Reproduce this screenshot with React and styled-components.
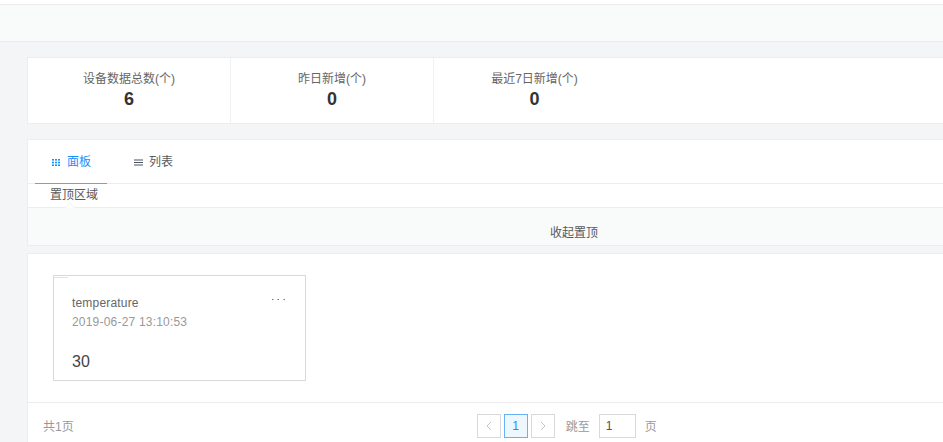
import React from "react";
import styled, { createGlobalStyle } from "styled-components";

const stats = [
  { label: "设备数据总数(个)", value: 6 },
  { label: "昨日新增(个)", value: 0 },
  { label: "最近7日新增(个)", value: 0 },
];

const App = () => {
  return (
    <Page>
      <GlobalStyle />
      <TopBar />
      <Content>
        <StatsCard>
          {stats.map((stat) => (
            <StatItem key={stat.label}>
              <StatLabel>{stat.label}</StatLabel>
              <StatValue>{stat.value}</StatValue>
            </StatItem>
          ))}
        </StatsCard>
        <TabsCard>
          <TabBar>
            <Tab $active>
              <svg width="9" height="7" viewBox="0 0 9 7" fill="#1890ff">
                <rect x="0" y="0" width="2" height="1.6" />
                <rect x="3" y="0" width="2" height="1.6" />
                <rect x="6" y="0" width="2" height="1.6" />
                <rect x="0" y="2.7" width="2" height="1.6" />
                <rect x="3" y="2.7" width="2" height="1.6" />
                <rect x="6" y="2.7" width="2" height="1.6" />
                <rect x="0" y="5.4" width="2" height="1.6" />
                <rect x="3" y="5.4" width="2" height="1.6" />
                <rect x="6" y="5.4" width="2" height="1.6" />
              </svg>
              面板
            </Tab>
            <Tab>
              <svg width="9" height="7" viewBox="0 0 9 7" fill="#4c5566">
                <rect x="0" y="0.5" width="9" height="1" />
                <rect x="0" y="3" width="9" height="1" />
                <rect x="0" y="5.5" width="9" height="1" />
              </svg>
              列表
            </Tab>
          </TabBar>
          <PinnedHead>
            置顶区域
            <Caret />
          </PinnedHead>
          <PinnedBody>收起置顶</PinnedBody>
        </TabsCard>
        <ListCard>
          <Grid>
            <DataCard>
              <Notch />
              <CardTop>
                <CardName>temperature</CardName>
                <More>
                  <svg width="13" height="1" viewBox="0 0 13 1" fill="#777">
                    <rect x="0" y="0" width="1.5" height="1" />
                    <rect x="5.5" y="0" width="1.5" height="1" />
                    <rect x="11.5" y="0" width="1.5" height="1" />
                  </svg>
                </More>
              </CardTop>
              <CardTime>2019-06-27 13:10:53</CardTime>
              <CardValue>30</CardValue>
            </DataCard>
          </Grid>
          <Footer>
            <Total>共1页</Total>
            <Pager>
              <PageBtn>
                <svg width="6" height="10" viewBox="0 0 6 10" fill="none" stroke="#c4c4c4">
                  <path d="M5 1 1 5l4 4" />
                </svg>
              </PageBtn>
              <PageBtn $active>1</PageBtn>
              <PageBtn>
                <svg width="6" height="10" viewBox="0 0 6 10" fill="none" stroke="#c4c4c4">
                  <path d="m1 1 4 4-4 4" />
                </svg>
              </PageBtn>
              <JumpLabel>跳至</JumpLabel>
              <JumpInput defaultValue="1" />
              <PageUnit>页</PageUnit>
            </Pager>
          </Footer>
        </ListCard>
      </Content>
    </Page>
  );
};

const GlobalStyle = createGlobalStyle`
  html, body {
    margin: 0;
    padding: 0;
    height: 100%;
    overflow: hidden;
    background: #f3f5f7;
  }
  body {
    font-family: "Liberation Sans", "Noto Sans CJK SC", sans-serif;
    font-size: 12px;
    color: #595959;
  }
`;

const Page = styled.div`
  width: 943px;
  height: 442px;
  overflow: hidden;
  background: #f3f5f7;
`;

const TopBar = styled.div`
  height: 36px;
  margin-top: 4px;
  background: #f9fafa;
  border-top: 1px solid #ececec;
  border-bottom: 1px solid #ebebeb;
  box-shadow: 0 -4px 0 #fff;
`;

const Content = styled.div`
  width: 1100px;
  padding: 15px 0 0 27px;
  display: flex;
  flex-direction: column;
  gap: 15px;
`;

const StatsCard = styled.section`
  display: flex;
  height: 65px;
  background: #fff;
  border: 1px solid #ebedf0;
`;

const StatItem = styled.div`
  width: 203px;
  box-sizing: border-box;
  border-right: 1px solid #f0f1f3;
  padding-top: 13px;
  display: flex;
  flex-direction: column;
  align-items: center;
  &:last-child {
    width: 201px;
    border-right: none;
  }
`;

const StatLabel = styled.div`
  line-height: 17px;
  color: #666;
`;

const StatValue = styled.div`
  font-size: 18px;
  font-weight: 700;
  line-height: 23px;
  color: #333;
`;

const TabsCard = styled.section`
  background: #fff;
  border: 1px solid #ebedf0;
  margin-bottom: -8px;
`;

const TabBar = styled.div`
  display: flex;
  height: 43px;
  padding-left: 7px;
  border-bottom: 1px solid #ebedf0;
`;

const Tab = styled.div`
  width: 72px;
  height: 44px;
  margin-right: 10px;
  box-sizing: border-box;
  padding: 14px 0 0 17px;
  display: flex;
  align-items: flex-start;
  gap: 6px;
  line-height: 16px;
  color: ${(props) => (props.$active ? "#1890ff" : "#595959")};
  border-bottom: ${(props) => (props.$active ? "1px solid #5aa8f5" : "none")};
  svg {
    margin-top: 5px;
    flex: none;
  }
`;

const PinnedHead = styled.div`
  position: relative;
  height: 23px;
  padding-left: 22px;
  line-height: 23px;
  color: #595959;
  border-bottom: 1px solid #ebedf0;
`;

const Caret = styled.span`
  position: absolute;
  left: 38px;
  bottom: -1px;
  width: 7px;
  height: 7px;
  background: #fff;
  border-top: 1px solid #f1f1f1;
  border-left: 1px solid #f1f1f1;
  transform: translateY(4px) rotate(45deg);
  clip-path: polygon(0 0, 100% 0, 0 100%);
`;

const PinnedBody = styled.div`
  height: 37px;
  background: #f9fafa;
  box-sizing: border-box;
  padding-top: 17px;
  padding-left: 522px;
  line-height: 17px;
  color: #595959;
`;

const ListCard = styled.section`
  background: #fff;
  border: 1px solid #ebedf0;
  height: 220px;
`;

const Grid = styled.div`
  height: 149px;
  padding: 21px 0 0 25px;
  box-sizing: border-box;
  border-bottom: 1px solid #ececec;
`;

const DataCard = styled.div`
  position: relative;
  width: 253px;
  height: 106px;
  box-sizing: border-box;
  border: 1px solid #d9d9d9;
  padding: 20px 18px 0;
`;

const Notch = styled.span`
  position: absolute;
  left: 0;
  top: 0;
  width: 14px;
  height: 1px;
  border-bottom: 1px solid #e4e4e4;
`;

const CardTop = styled.div`
  display: flex;
  justify-content: space-between;
`;

const CardName = styled.div`
  line-height: 15px;
  letter-spacing: 0.18px;
  color: #666;
`;

const More = styled.span`
  margin-right: 2px;
  svg {
    display: block;
    margin-top: 3px;
  }
`;

const CardTime = styled.div`
  margin-top: 4px;
  line-height: 15px;
  letter-spacing: 0.2px;
  color: #999;
`;

const CardValue = styled.div`
  margin-top: 22px;
  font-size: 16px;
  line-height: 20px;
  color: #444;
`;

const Footer = styled.div`
  display: flex;
  align-items: flex-start;
  padding: 11px 0 0 15px;
`;

const Total = styled.div`
  line-height: 27px;
  color: #999;
`;

const Pager = styled.div`
  display: flex;
  align-items: center;
  margin-left: 403px;
`;

const PageBtn = styled.div`
  width: 24px;
  height: 24px;
  box-sizing: border-box;
  margin-right: 3px;
  display: flex;
  align-items: center;
  justify-content: center;
  border: 1px solid ${(props) => (props.$active ? "#69b1f5" : "#d9d9d9")};
  background: ${(props) => (props.$active ? "#eef6fe" : "#fff")};
  color: ${(props) => (props.$active ? "#1890ff" : "#999")};
`;

const JumpLabel = styled.span`
  margin: 0 0 2px 8px;
  color: #999;
`;

const JumpInput = styled.input`
  width: 37px;
  height: 24px;
  box-sizing: border-box;
  margin-left: 9px;
  padding: 0 0 0 6px;
  border: 1px solid #d9d9d9;
  outline: none;
  font: inherit;
  color: #555;
`;

const PageUnit = styled.span`
  margin: 0 0 2px 9px;
  color: #999;
`;

export default App;
